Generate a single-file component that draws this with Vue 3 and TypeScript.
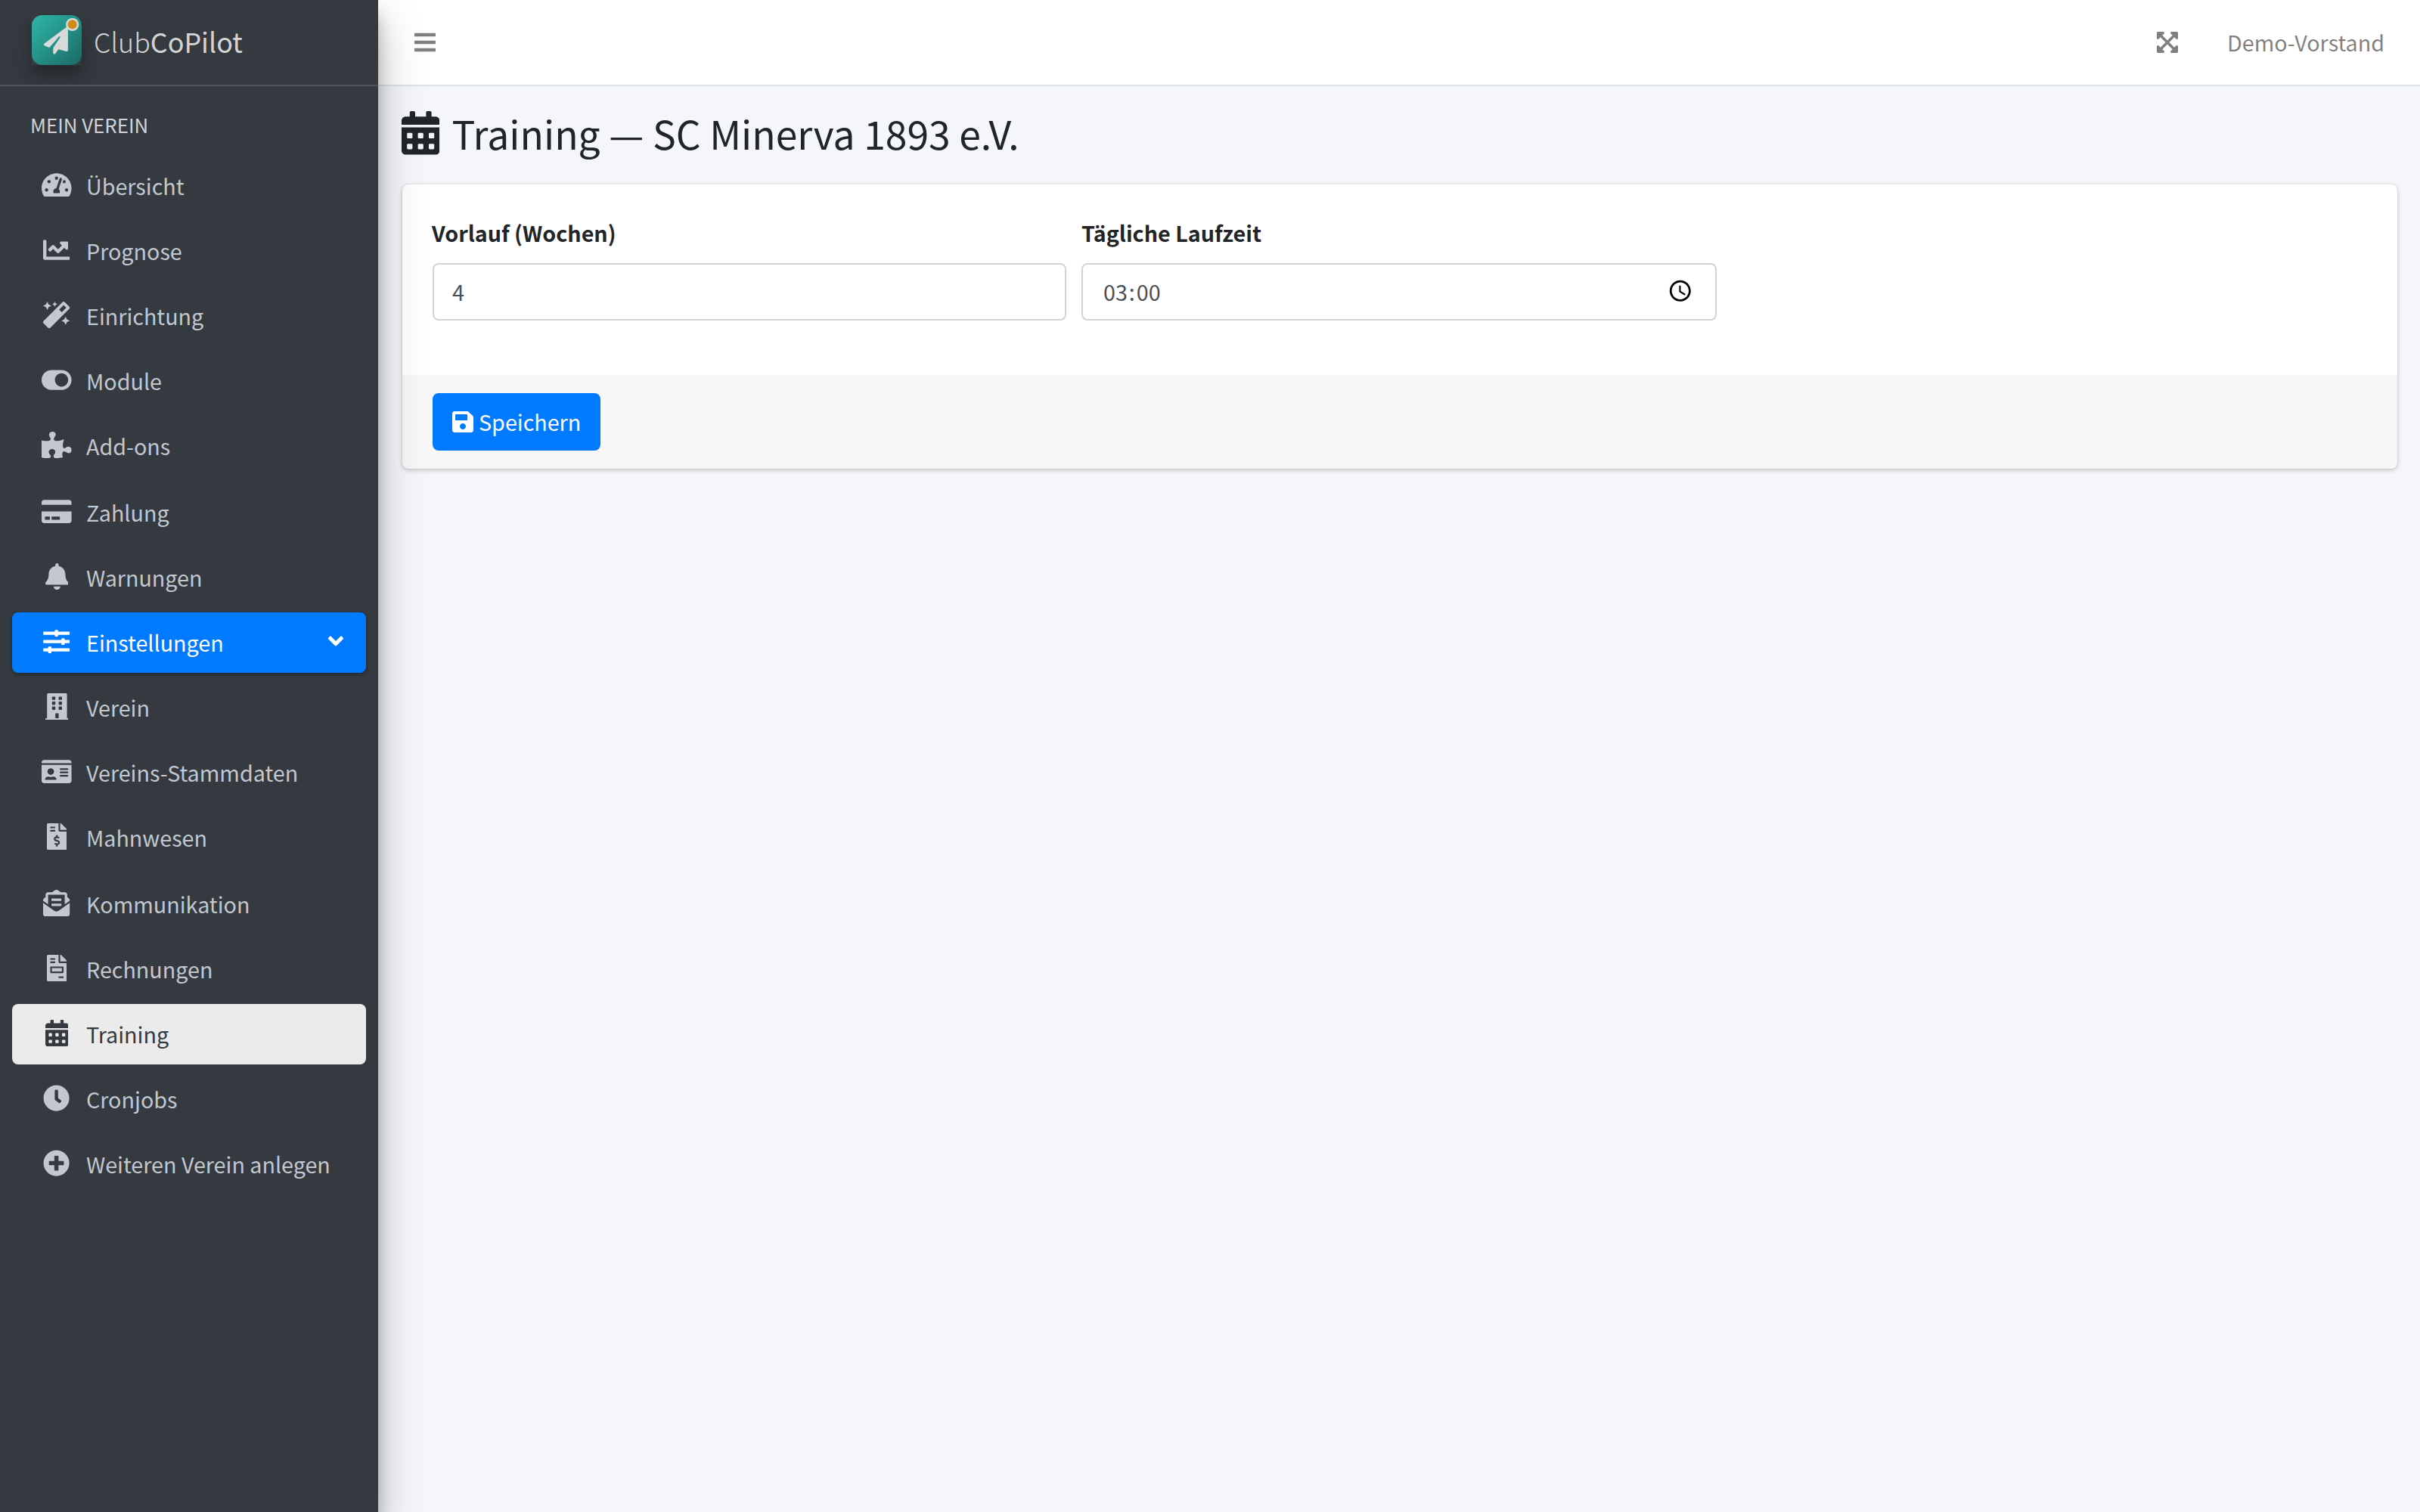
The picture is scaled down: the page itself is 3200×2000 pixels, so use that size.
<script setup lang="ts">
import { ref } from 'vue'

interface Icon {
  w: number
  d: string
}

interface NavItem {
  label: string
  icon: string
  state?: 'open' | 'current'
}

const icons: Record<string, Icon> = {
  gauge: {
    w: 576,
    d: 'M288 32C128.94 32 0 160.94 0 320c0 52.8 14.25 102.26 39.06 144.8 5.61 9.62 16.3 15.2 27.44 15.2h443c11.14 0 21.83-5.58 27.44-15.2C561.75 422.26 576 372.8 576 320c0-159.06-128.94-288-288-288zm0 64c14.71 0 26.58 10.13 30.32 23.65-1.11 2.26-2.64 4.23-3.45 6.67l-9.22 27.67c-5.13 3.49-10.97 6.01-17.64 6.01-17.67 0-32-14.33-32-32S270.33 96 288 96zM96 384c-17.67 0-32-14.33-32-32s14.33-32 32-32 32 14.33 32 32-14.33 32-32 32zm48-160c-17.67 0-32-14.33-32-32s14.33-32 32-32 32 14.33 32 32-14.33 32-32 32zm246.77-72.41l-61.33 184C343.13 347.33 352 364.54 352 384c0 11.72-3.38 22.55-8.88 32H232.88c-5.5-9.45-8.88-20.28-8.88-32 0-33.94 26.5-61.43 59.9-63.59l61.34-184.01c4.17-12.56 17.73-19.45 30.36-15.17 12.57 4.19 19.35 17.79 15.17 30.36zm14.66 57.2l15.52-46.55c3.47-1.29 7.13-2.23 11.05-2.23 17.67 0 32 14.33 32 32s-14.33 32-32 32c-11.38-.01-20.89-6.28-26.57-15.22zM480 384c-17.67 0-32-14.33-32-32s14.33-32 32-32 32 14.33 32 32-14.33 32-32 32z',
  },
  chart: {
    w: 512,
    d: 'M496 384H64V80c0-8.84-7.16-16-16-16H16C7.16 64 0 71.16 0 80v336c0 17.67 14.33 32 32 32h464c8.84 0 16-7.16 16-16v-32c0-8.84-7.16-16-16-16zM464 96H345.94c-21.38 0-32.09 25.85-16.97 40.97l32.4 32.4L288 242.75l-73.37-73.37c-12.5-12.5-32.76-12.5-45.25 0l-68.69 68.69c-6.25 6.25-6.25 16.38 0 22.63l22.62 22.62c6.25 6.25 16.38 6.25 22.63 0L192 237.25l73.37 73.37c12.5 12.5 32.76 12.5 45.25 0l96-96 32.4 32.4c15.12 15.12 40.97 4.41 40.97-16.97V112c.01-8.84-7.15-16-15.99-16z',
  },
  wand: {
    w: 512,
    d: 'M224 96l16-32 32-16-32-16-16-32-16 32-32 16 32 16 16 32zM80 160l26.66-53.33L160 80l-53.34-26.67L80 0 53.34 53.33 0 80l53.34 26.67L80 160zm352 128l-26.66 53.33L352 368l53.34 26.67L432 448l26.66-53.33L512 368l-53.34-26.67L432 288zm70.62-193.77L417.77 9.38C411.53 3.12 403.34 0 395.15 0c-8.19 0-16.38 3.12-22.63 9.38L9.38 372.52c-12.5 12.5-12.5 32.76 0 45.25l84.85 84.85c6.25 6.25 14.44 9.37 22.62 9.37 8.19 0 16.38-3.12 22.63-9.37l363.14-363.15c12.5-12.48 12.5-32.75 0-45.24zM359.45 203.46l-50.91-50.91 86.6-86.6 50.91 50.91-86.6 86.6z',
  },
  toggle: {
    w: 576,
    d: 'M384 64H192C86 64 0 150 0 256s86 192 192 192h192c106 0 192-86 192-192S490 64 384 64zm0 320c-70.8 0-128-57.3-128-128 0-70.8 57.3-128 128-128 70.8 0 128 57.3 128 128 0 70.8-57.3 128-128 128z',
  },
  puzzle: {
    w: 576,
    d: 'M519.442 288.651c-41.519 0-59.5 31.593-82.058 31.593C377.409 320.244 432 144 432 144s-196.288 80-196.288-3.297c0-35.827 36.288-46.25 36.288-85.985C272 19.216 243.885 0 210.539 0c-34.654 0-66.366 18.891-66.366 56.346 0 41.364 31.711 59.277 31.711 81.75C175.885 207.719 0 166.758 0 166.758v333.237s178.635 41.047 178.635-28.662c0-22.473-40-40.107-40-81.471 0-37.456 29.25-56.346 63.577-56.346 33.673 0 61.788 19.216 61.788 54.717 0 39.735-36.288 50.158-36.288 85.985 0 60.803 129.675 25.73 181.23 25.73 0 0-34.725-120.101 25.827-120.101 35.962 0 46.423 36.152 86.308 36.152C556.712 416 576 387.99 576 354.443c0-34.199-18.962-65.792-56.558-65.792z',
  },
  card: {
    w: 576,
    d: 'M0 432c0 26.5 21.5 48 48 48h480c26.5 0 48-21.5 48-48V256H0v176zm192-68c0-6.6 5.4-12 12-12h136c6.6 0 12 5.4 12 12v40c0 6.6-5.4 12-12 12H204c-6.6 0-12-5.4-12-12v-40zm-128 0c0-6.6 5.4-12 12-12h72c6.6 0 12 5.4 12 12v40c0 6.6-5.4 12-12 12H76c-6.6 0-12-5.4-12-12v-40zM576 80v48H0V80c0-26.5 21.5-48 48-48h480c26.5 0 48 21.5 48 48z',
  },
  bell: {
    w: 448,
    d: 'M224 512c35.32 0 63.97-28.65 63.97-64H160.03c0 35.35 28.65 64 63.97 64zm215.39-149.71c-19.32-20.76-55.47-51.99-55.47-154.29 0-77.7-54.48-139.9-127.94-155.16V32c0-17.67-14.32-32-31.98-32s-31.98 14.33-31.98 32v20.84C118.56 68.1 64.08 130.3 64.08 208c0 102.3-36.15 133.53-55.47 154.29-6 6.45-8.66 14.16-8.61 21.71.11 16.4 12.98 32 32.1 32h383.8c19.12 0 32-15.6 32.1-32 .05-7.55-2.61-15.27-8.61-21.71z',
  },
  sliders: {
    w: 512,
    d: 'M496 384H160v-16c0-8.8-7.2-16-16-16h-32c-8.8 0-16 7.2-16 16v16H16c-8.8 0-16 7.2-16 16v32c0 8.8 7.2 16 16 16h80v16c0 8.8 7.2 16 16 16h32c8.8 0 16-7.2 16-16v-16h336c8.8 0 16-7.2 16-16v-32c0-8.8-7.2-16-16-16zm0-160h-80v-16c0-8.8-7.2-16-16-16h-32c-8.8 0-16 7.2-16 16v16H16c-8.8 0-16 7.2-16 16v32c0 8.8 7.2 16 16 16h336v16c0 8.8 7.2 16 16 16h32c8.8 0 16-7.2 16-16v-16h80c8.8 0 16-7.2 16-16v-32c0-8.8-7.2-16-16-16zm0-160H288V48c0-8.8-7.2-16-16-16h-32c-8.8 0-16 7.2-16 16v16H16C7.2 64 0 71.2 0 80v32c0 8.8 7.2 16 16 16h208v16c0 8.8 7.2 16 16 16h32c8.8 0 16-7.2 16-16v-16h208c8.8 0 16-7.2 16-16V80c0-8.8-7.2-16-16-16z',
  },
  building: {
    w: 448,
    d: 'M436 480h-20V24c0-13.255-10.745-24-24-24H56C42.745 0 32 10.745 32 24v456H12c-6.627 0-12 5.373-12 12v20h448v-20c0-6.627-5.373-12-12-12zM128 76c0-6.627 5.373-12 12-12h40c6.627 0 12 5.373 12 12v40c0 6.627-5.373 12-12 12h-40c-6.627 0-12-5.373-12-12V76zm0 96c0-6.627 5.373-12 12-12h40c6.627 0 12 5.373 12 12v40c0 6.627-5.373 12-12 12h-40c-6.627 0-12-5.373-12-12v-40zm52 148h-40c-6.627 0-12-5.373-12-12v-40c0-6.627 5.373-12 12-12h40c6.627 0 12 5.373 12 12v40c0 6.627-5.373 12-12 12zm76 160h-64v-84c0-6.627 5.373-12 12-12h40c6.627 0 12 5.373 12 12v84zm64-172c0 6.627-5.373 12-12 12h-40c-6.627 0-12-5.373-12-12v-40c0-6.627 5.373-12 12-12h40c6.627 0 12 5.373 12 12v40zm0-96c0 6.627-5.373 12-12 12h-40c-6.627 0-12-5.373-12-12v-40c0-6.627 5.373-12 12-12h40c6.627 0 12 5.373 12 12v40zm0-96c0 6.627-5.373 12-12 12h-40c-6.627 0-12-5.373-12-12V76c0-6.627 5.373-12 12-12h40c6.627 0 12 5.373 12 12v40z',
  },
  idcard: {
    w: 576,
    d: 'M528 32H48C21.5 32 0 53.5 0 80v16h576V80c0-26.5-21.5-48-48-48zM0 432c0 26.5 21.5 48 48 48h480c26.5 0 48-21.5 48-48V128H0v304zm352-232c0-4.4 3.6-8 8-8h144c4.4 0 8 3.6 8 8v16c0 4.4-3.6 8-8 8H360c-4.4 0-8-3.6-8-8v-16zm0 64c0-4.4 3.6-8 8-8h144c4.4 0 8 3.6 8 8v16c0 4.4-3.6 8-8 8H360c-4.4 0-8-3.6-8-8v-16zm0 64c0-4.4 3.6-8 8-8h144c4.4 0 8 3.6 8 8v16c0 4.4-3.6 8-8 8H360c-4.4 0-8-3.6-8-8v-16zM176 192c35.3 0 64 28.7 64 64s-28.7 64-64 64-64-28.7-64-64 28.7-64 64-64zM67.1 396.2C75.5 370.5 99.6 352 128 352h8.2c12.3 5.1 25.7 8 39.8 8s27.6-2.9 39.8-8h8.2c28.4 0 52.5 18.5 60.9 44.2 3.2 9.9-5.2 19.8-15.6 19.8H82.7c-10.4 0-18.8-10-15.6-19.8z',
  },
  dunning: {
    w: 384,
    d: 'M377 105L279.1 7c-4.5-4.5-10.6-7-17-7H256v128h128v-6.1c0-6.3-2.5-12.4-7-16.9zm-153 31V0H24C10.7 0 0 10.7 0 24v464c0 13.3 10.7 24 24 24h336c13.3 0 24-10.7 24-24V160H248c-13.2 0-24-10.8-24-24zM64 72c0-4.42 3.58-8 8-8h80c4.42 0 8 3.58 8 8v16c0 4.42-3.58 8-8 8H72c-4.42 0-8-3.58-8-8V72zm0 80v-16c0-4.42 3.58-8 8-8h80c4.42 0 8 3.58 8 8v16c0 4.42-3.58 8-8 8H72c-4.42 0-8-3.58-8-8zm144 263.88V440c0 4.42-3.58 8-8 8h-16c-4.42 0-8-3.58-8-8v-24.29c-11.29-.58-22.27-4.52-31.37-11.35-3.9-2.93-4.1-8.77-.57-12.14l11.75-11.21c2.77-2.64 6.89-2.76 10.13-.73 3.87 2.42 8.26 3.72 12.82 3.72h28.11c6.5 0 11.8-5.92 11.8-13.19 0-5.95-3.61-11.19-8.77-12.73l-45-13.5c-18.59-5.58-31.58-23.42-31.58-43.39 0-24.52 19.05-44.44 42.67-45.07V232c0-4.42 3.58-8 8-8h16c4.42 0 8 3.58 8 8v24.29c11.29.58 22.27 4.51 31.37 11.35 3.9 2.93 4.1 8.77.57 12.14l-11.75 11.21c-2.77 2.64-6.89 2.76-10.13.73-3.87-2.43-8.26-3.72-12.82-3.72h-28.11c-6.5 0-11.8 5.92-11.8 13.19 0 5.95 3.61 11.19 8.77 12.73l45 13.5c18.59 5.58 31.58 23.42 31.58 43.39 0 24.53-19.05 44.44-42.67 45.07z',
  },
  envelope: {
    w: 512,
    d: 'M176 216h160c8.84 0 16-7.16 16-16v-16c0-8.84-7.16-16-16-16H176c-8.84 0-16 7.16-16 16v16c0 8.84 7.16 16 16 16zm-16 80c0 8.84 7.16 16 16 16h160c8.84 0 16-7.16 16-16v-16c0-8.84-7.16-16-16-16H176c-8.84 0-16 7.16-16 16v16zm96 121.13c-16.42 0-32.84-5.06-46.86-15.19L0 250.86V464c0 26.51 21.49 48 48 48h416c26.51 0 48-21.49 48-48V250.86L302.86 401.94c-14.02 10.12-30.44 15.19-46.86 15.19zm237.61-254.18c-8.85-6.94-17.24-13.47-29.61-22.81V96c0-26.51-21.49-48-48-48h-77.55c-3.04-2.2-5.87-4.26-9.04-6.56C312.6 29.17 279.2-.35 256 0c-23.2-.35-56.59 29.17-73.41 41.44-3.17 2.3-6 4.36-9.04 6.56H96c-26.51 0-48 21.49-48 48v44.14c-12.37 9.33-20.76 15.87-29.61 22.81A47.995 47.995 0 0 0 0 200.72v10.65l96 69.35V96h320v184.72l96-69.35v-10.65c0-14.74-6.78-28.67-18.39-37.77z',
  },
  invoice: {
    w: 384,
    d: 'M288 256H96v64h192v-64zm89-151L279.1 7c-4.5-4.5-10.6-7-17-7H256v128h128v-6.1c0-6.3-2.5-12.4-7-16.9zm-153 31V0H24C10.7 0 0 10.7 0 24v464c0 13.3 10.7 24 24 24h336c13.3 0 24-10.7 24-24V160H248c-13.2 0-24-10.8-24-24zM64 72c0-4.42 3.58-8 8-8h80c4.42 0 8 3.58 8 8v16c0 4.42-3.58 8-8 8H72c-4.42 0-8-3.58-8-8V72zm0 64c0-4.42 3.58-8 8-8h80c4.42 0 8 3.58 8 8v16c0 4.42-3.58 8-8 8H72c-4.42 0-8-3.58-8-8v-16zm256 304c0 4.42-3.58 8-8 8h-80c-4.42 0-8-3.58-8-8v-16c0-4.42 3.58-8 8-8h80c4.42 0 8 3.58 8 8v16zm0-200v96c0 8.84-7.16 16-16 16H80c-8.84 0-16-7.16-16-16v-96c0-8.84 7.16-16 16-16h224c8.84 0 16 7.16 16 16z',
  },
  calendar: {
    w: 448,
    d: 'M0 464c0 26.5 21.5 48 48 48h352c26.5 0 48-21.5 48-48V192H0v272zm320-196c0-6.6 5.4-12 12-12h40c6.6 0 12 5.4 12 12v40c0 6.6-5.4 12-12 12h-40c-6.6 0-12-5.4-12-12v-40zm0 128c0-6.6 5.4-12 12-12h40c6.6 0 12 5.4 12 12v40c0 6.6-5.4 12-12 12h-40c-6.6 0-12-5.4-12-12v-40zM192 268c0-6.6 5.4-12 12-12h40c6.6 0 12 5.4 12 12v40c0 6.6-5.4 12-12 12h-40c-6.6 0-12-5.4-12-12v-40zm0 128c0-6.6 5.4-12 12-12h40c6.6 0 12 5.4 12 12v40c0 6.6-5.4 12-12 12h-40c-6.6 0-12-5.4-12-12v-40zM64 268c0-6.6 5.4-12 12-12h40c6.6 0 12 5.4 12 12v40c0 6.6-5.4 12-12 12H76c-6.6 0-12-5.4-12-12v-40zm0 128c0-6.6 5.4-12 12-12h40c6.6 0 12 5.4 12 12v40c0 6.6-5.4 12-12 12H76c-6.6 0-12-5.4-12-12v-40zM400 64h-48V16c0-8.8-7.2-16-16-16h-32c-8.8 0-16 7.2-16 16v48H160V16c0-8.8-7.2-16-16-16h-32c-8.8 0-16 7.2-16 16v48H48C21.5 64 0 85.5 0 112v48h448v-48c0-26.5-21.5-48-48-48z',
  },
  clock: {
    w: 512,
    d: 'M256,8C119,8,8,119,8,256S119,504,256,504,504,393,504,256,393,8,256,8Zm92.49,313h0l-20,25a16,16,0,0,1-22.49,2.5h0l-67-49.72a40,40,0,0,1-15-31.23V112a16,16,0,0,1,16-16h32a16,16,0,0,1,16,16V256l58,42.5A16,16,0,0,1,348.49,321Z',
  },
  plus: {
    w: 512,
    d: 'M256 8C119 8 8 119 8 256s111 248 248 248 248-111 248-248S393 8 256 8zm144 276c0 6.6-5.4 12-12 12h-92v92c0 6.6-5.4 12-12 12h-56c-6.6 0-12-5.4-12-12v-92h-92c-6.6 0-12-5.4-12-12v-56c0-6.6 5.4-12 12-12h92v-92c0-6.6 5.4-12 12-12h56c6.6 0 12 5.4 12 12v92h92c6.6 0 12 5.4 12 12v56z',
  },
  bars: {
    w: 448,
    d: 'M16 132h416c8.837 0 16-7.163 16-16V76c0-8.837-7.163-16-16-16H16C7.163 60 0 67.163 0 76v40c0 8.837 7.163 16 16 16zm0 160h416c8.837 0 16-7.163 16-16v-40c0-8.837-7.163-16-16-16H16c-8.837 0-16 7.163-16 16v40c0 8.837 7.163 16 16 16zm0 160h416c8.837 0 16-7.163 16-16v-40c0-8.837-7.163-16-16-16H16c-8.837 0-16 7.163-16 16v40c0 8.837 7.163 16 16 16z',
  },
  expand: {
    w: 448,
    d: 'M448 344v112a23.94 23.94 0 0 1-24 24H312c-21.39 0-32.09-25.9-17-41l36.2-36.2L224 295.6 116.77 402.9 153 439c15.09 15.1 4.39 41-17 41H24a23.94 23.94 0 0 1-24-24V344c0-21.4 25.89-32.1 41-17l36.19 36.2L184.46 256 77.18 148.7 41 185c-15.1 15.1-41 4.4-41-17V56a23.94 23.94 0 0 1 24-24h112c21.39 0 32.09 25.9 17 41l-36.2 36.2L224 216.4l107.23-107.3L295 73c-15.09-15.1-4.39-41 17-41h112a23.94 23.94 0 0 1 24 24v112c0 21.4-25.89 32.1-41 17l-36.19-36.2L263.54 256l107.28 107.3L407 327.1c15.1-15.2 41-4.5 41 16.9z',
  },
  save: {
    w: 448,
    d: 'M433.941 129.941l-83.882-83.882A48 48 0 0 0 316.118 32H48C21.49 32 0 53.49 0 80v352c0 26.51 21.49 48 48 48h352c26.51 0 48-21.49 48-48V163.882a48 48 0 0 0-14.059-33.941zM224 416c-35.346 0-64-28.654-64-64 0-35.346 28.654-64 64-64s64 28.654 64 64c0 35.346-28.654 64-64 64zm96-304.52V212c0 6.627-5.373 12-12 12H76c-6.627 0-12-5.373-12-12V108c0-6.627 5.373-12 12-12h228.52c3.183 0 6.235 1.264 8.485 3.515l3.48 3.48A11.996 11.996 0 0 1 320 111.48z',
  },
  angle: {
    w: 256,
    d: 'M31.7 239l136-136c9.4-9.4 24.6-9.4 33.9 0l22.6 22.6c9.4 9.4 9.4 24.6 0 33.9L127.9 256l96.4 96.4c9.4 9.4 9.4 24.6 0 33.9L201.7 409c-9.4 9.4-24.6 9.4-33.9 0l-136-136c-9.5-9.4-9.5-24.6-.1-34z',
  },
}

const nav: NavItem[] = [
  { label: 'Übersicht', icon: 'gauge' },
  { label: 'Prognose', icon: 'chart' },
  { label: 'Einrichtung', icon: 'wand' },
  { label: 'Module', icon: 'toggle' },
  { label: 'Add-ons', icon: 'puzzle' },
  { label: 'Zahlung', icon: 'card' },
  { label: 'Warnungen', icon: 'bell' },
  { label: 'Einstellungen', icon: 'sliders', state: 'open' },
  { label: 'Verein', icon: 'building' },
  { label: 'Vereins-Stammdaten', icon: 'idcard' },
  { label: 'Mahnwesen', icon: 'dunning' },
  { label: 'Kommunikation', icon: 'envelope' },
  { label: 'Rechnungen', icon: 'invoice' },
  { label: 'Training', icon: 'calendar', state: 'current' },
  { label: 'Cronjobs', icon: 'clock' },
  { label: 'Weiteren Verein anlegen', icon: 'plus' },
]

const weeks = ref('4')
const box = (name: string) => `0 0 ${icons[name].w} 512`
</script>

<template>
  <div class="wrapper">
    <aside class="sidebar">
      <a class="brand">
        <svg class="brand-logo" viewBox="0 0 66 66">
          <defs>
            <linearGradient id="logo-bg" x1="0" y1="0" x2="1" y2="1">
              <stop offset="0" stop-color="#2eb6a7" />
              <stop offset="1" stop-color="#1b6a64" />
            </linearGradient>
          </defs>
          <rect width="66" height="66" rx="14" fill="url(#logo-bg)" />
          <path
            d="M47.3 14.7L16.6 37.6Q15 39.4 17 40.4L23.3 43L36.2 28.2Q37.6 27.6 37.6 29.2L28.8 42.5Q28.2 43.6 28.2 45V50Q28.6 52 30.8 51.4L35.4 45.2L45.6 48Q47.8 48.4 47.9 46.6V18Z"
            fill="#d8d9db"
          />
          <circle cx="53.7" cy="12.3" r="8.6" fill="#d8d9db" />
          <circle cx="53.7" cy="12.3" r="6" fill="#cf8c18" />
        </svg>
        <span class="brand-text">Club<strong>CoPilot</strong></span>
      </a>
      <nav>
        <div class="nav-header">MEIN VEREIN</div>
        <ul class="nav-list">
          <li v-for="item in nav" :key="item.label">
            <a class="nav-link" :class="item.state">
              <span class="nav-icon">
                <svg :viewBox="box(item.icon)"><path :d="icons[item.icon].d" /></svg>
              </span>
              <span class="nav-label">{{ item.label }}</span>
              <svg v-if="item.state === 'open'" class="chevron" :viewBox="box('angle')">
                <path :d="icons.angle.d" />
              </svg>
            </a>
          </li>
        </ul>
      </nav>
    </aside>

    <div class="main">
      <header class="navbar">
        <svg class="fa" :viewBox="box('bars')"><path :d="icons.bars.d" /></svg>
        <div class="navbar-right">
          <svg class="fa" :viewBox="box('expand')"><path :d="icons.expand.d" /></svg>
          <span class="user">Demo-Vorstand</span>
        </div>
      </header>

      <h1 class="title">
        <svg :viewBox="box('calendar')"><path :d="icons.calendar.d" /></svg>
        <span>Training — SC Minerva 1893 e.V.</span>
      </h1>

      <form class="card" @submit.prevent>
        <div class="card-body">
          <div class="field">
            <label for="weeks">Vorlauf (Wochen)</label>
            <input id="weeks" v-model="weeks" class="control" type="text" />
          </div>
          <div class="field">
            <label>Tägliche Laufzeit</label>
            <div class="control time">
              <span class="part">03</span><span>:</span><span class="part">00</span>
              <svg class="picker" viewBox="0 0 24 24">
                <path
                  d="M12 2C6.5 2 2 6.5 2 12s4.5 10 10 10 10-4.5 10-10S17.5 2 12 2zm0 18c-4.4 0-8-3.6-8-8s3.6-8 8-8 8 3.6 8 8-3.6 8-8 8zm.5-13H11v6l5.2 3.2.8-1.3-4.5-2.7V7z"
                />
              </svg>
            </div>
          </div>
        </div>
        <div class="card-footer">
          <button class="btn" type="submit">
            <svg class="fa" :viewBox="box('save')"><path :d="icons.save.d" /></svg>
            <span>Speichern</span>
          </button>
        </div>
      </form>
    </div>
  </div>
</template>

<style>
body {
  margin: 0;
  background: #f4f6f9;
}
</style>

<style scoped>
.wrapper {
  display: flex;
  width: 3200px;
  height: 2000px;
  overflow: hidden;
  background: #f4f6f9;
  color: #212529;
  font-family: 'Noto Sans CJK SC', 'Noto Sans', sans-serif;
  font-size: 28.7px;
  line-height: 48px;
}

svg {
  display: block;
  flex: none;
  fill: currentColor;
}

.fa {
  width: 28px;
  height: 32px;
}

.sidebar {
  position: relative;
  z-index: 2;
  flex: none;
  box-sizing: border-box;
  width: 500px;
  background: #343a40;
  box-shadow: 0 28px 56px rgba(0, 0, 0, 0.25), 0 20px 20px rgba(0, 0, 0, 0.22);
}

.brand {
  display: flex;
  align-items: flex-start;
  box-sizing: border-box;
  height: 114px;
  padding: 20px 0 0 42px;
  overflow: hidden;
  border-bottom: 2px solid #4b545c;
  color: rgba(255, 255, 255, 0.8);
}

.brand-logo {
  width: 66px;
  height: 66px;
  box-shadow: 0 20px 40px rgba(0, 0, 0, 0.15), 0 12px 12px rgba(0, 0, 0, 0.18);
}

.brand-text {
  margin: 4px 0 0 16px;
  font-size: 35.86px;
  font-weight: 300;
  line-height: 60px;
  white-space: nowrap;
}

.brand-text strong {
  font-weight: 400;
}

.nav-header {
  padding: 29px 0 20px 40px;
  color: #d0d4db;
  font-size: 25.85px;
  line-height: 43px;
}

.nav-list {
  margin: 0;
  padding: 0 16px;
  list-style: none;
}

.nav-list li {
  margin-bottom: 6px;
}

.nav-list li:nth-child(6n + 5) {
  margin-bottom: 8px;
}

.nav-link {
  display: flex;
  align-items: center;
  box-sizing: border-box;
  height: 80px;
  padding: 16px 32px 16px 33px;
  border-radius: 8px;
  color: #c2c7d0;
  white-space: nowrap;
}

.nav-link.open {
  background: #007bff;
  color: #fff;
  box-shadow: 0 2px 6px rgba(0, 0, 0, 0.12), 0 2px 4px rgba(0, 0, 0, 0.24);
}

.nav-link.current {
  background: rgba(255, 255, 255, 0.9);
  color: #343a40;
}

.nav-icon {
  display: flex;
  justify-content: center;
  width: 52px;
  margin: 0 13px 3px 0;
}

.nav-icon svg {
  height: 35.2px;
}

.nav-label {
  flex: 1;
  margin-bottom: 1px;
}

.chevron {
  width: 16px;
  height: 32px;
  margin: 0 0 5px;
  transform: rotate(-90deg);
}

.main {
  flex: 1;
  min-width: 0;
}

.navbar {
  display: flex;
  align-items: center;
  justify-content: space-between;
  box-sizing: border-box;
  height: 114px;
  padding: 0 47px 0 48px;
  border-bottom: 2px solid #dee2e6;
  background: #fff;
  color: rgba(0, 0, 0, 0.5);
}

.navbar-right {
  display: flex;
  align-items: center;
  gap: 65px;
}

.user {
  margin-bottom: 1px;
}

.title {
  display: flex;
  align-items: flex-start;
  gap: 16px;
  height: 70px;
  margin: 0;
  padding: 30px 31px;
  font-size: 51.6px;
  font-weight: 400;
  line-height: 63px;
}

.title svg {
  width: 50.4px;
  height: 57.6px;
  margin-top: 3px;
}

.card {
  margin: 0 30px 0 32px;
  border-radius: 8px;
  background: #fff;
  box-shadow: 0 0 2px rgba(0, 0, 0, 0.125), 0 2px 6px rgba(0, 0, 0, 0.2);
}

.card-body {
  display: grid;
  grid-template-columns: 838px 840px;
  gap: 20px;
  padding: 40px 40px 72px;
}

.field label {
  display: block;
  margin-bottom: 17px;
  font-weight: 700;
  line-height: 47px;
}

.field:first-child label {
  margin-left: -1px;
}

.control {
  display: block;
  box-sizing: border-box;
  width: 100%;
  height: 76px;
  padding: 11px 24px 12px;
  border: 2px solid #ced4da;
  border-radius: 8px;
  background: #fff;
  color: #495057;
  font: inherit;
}

.control.time {
  display: flex;
  align-items: center;
  padding-left: 25px;
}

.part {
  padding: 0 2px;
}

.picker {
  width: 33.6px;
  height: 33.6px;
  margin: 0 5px 1px auto;
  fill: #000;
}

.card-footer {
  padding: 24px 40px;
  border-radius: 0 0 8px 8px;
  background: rgba(0, 0, 0, 0.03);
}

.btn {
  display: flex;
  align-items: center;
  gap: 7px;
  box-sizing: border-box;
  height: 76px;
  padding: 12px 24px;
  border: 2px solid #007bff;
  border-radius: 8px;
  background: #007bff;
  color: #fff;
  font: inherit;
}

.btn span {
  margin-bottom: 1px;
}
</style>
